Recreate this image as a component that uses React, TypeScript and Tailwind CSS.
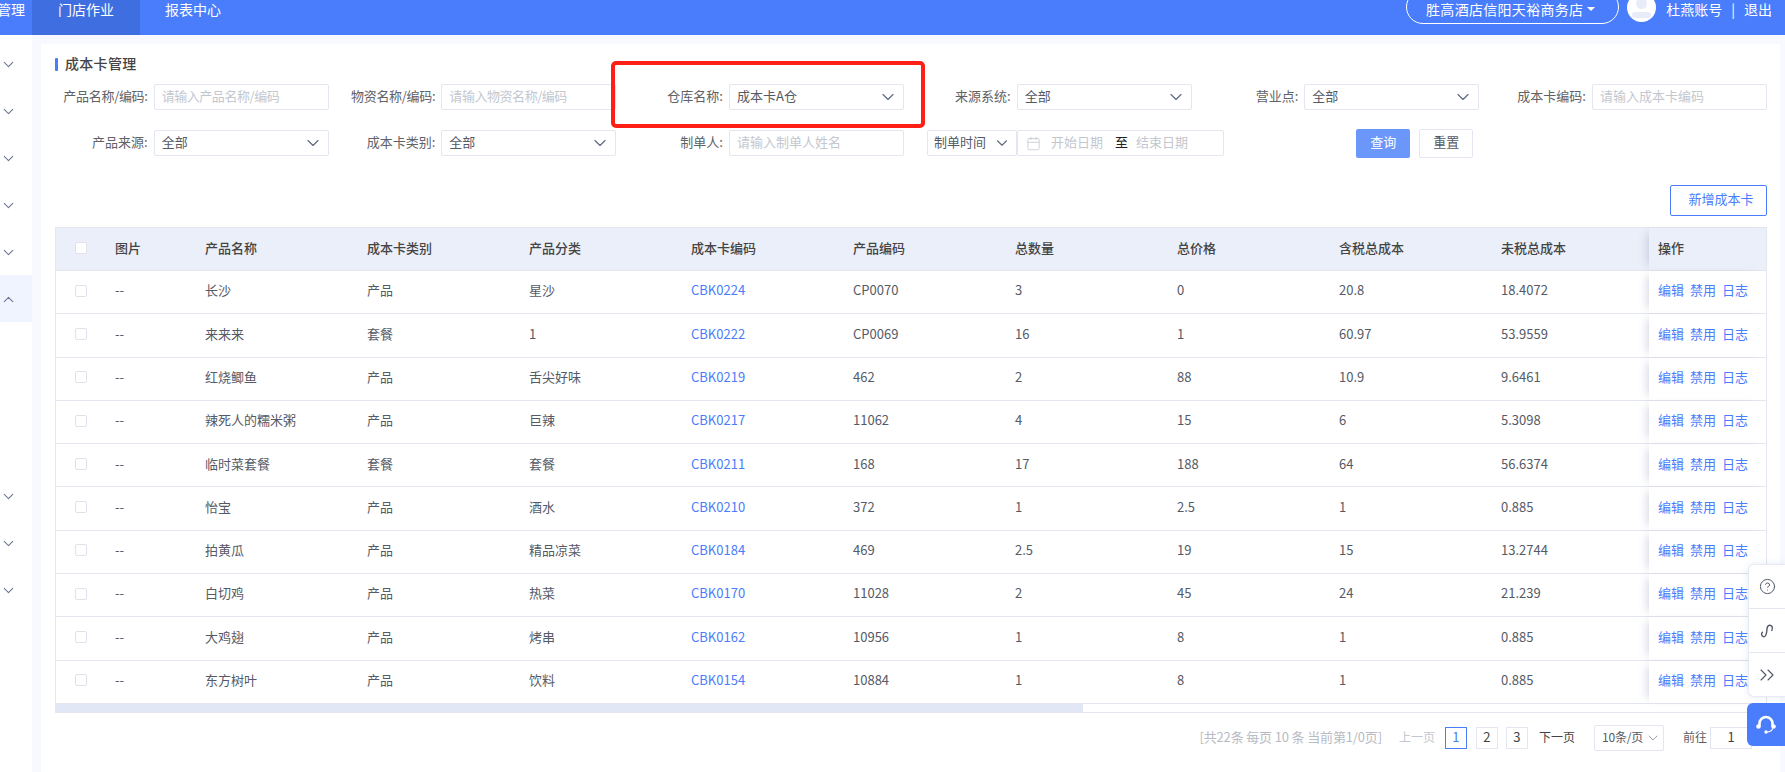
import React from 'react';
import { Calendar, ChevronDown, ChevronUp, ChevronsRight, CircleHelp } from 'lucide-react';

const rows = [
  ['长沙', '产品', '星沙', 'CBK0224', 'CP0070', '3', '0', '20.8', '18.4072'],
  ['来来来', '套餐', '1', 'CBK0222', 'CP0069', '16', '1', '60.97', '53.9559'],
  ['红烧鲫鱼', '产品', '舌尖好味', 'CBK0219', '462', '2', '88', '10.9', '9.6461'],
  ['辣死人的糯米粥', '产品', '巨辣', 'CBK0217', '11062', '4', '15', '6', '5.3098'],
  ['临时菜套餐', '套餐', '套餐', 'CBK0211', '168', '17', '188', '64', '56.6374'],
  ['怡宝', '产品', '酒水', 'CBK0210', '372', '1', '2.5', '1', '0.885'],
  ['拍黄瓜', '产品', '精品凉菜', 'CBK0184', '469', '2.5', '19', '15', '13.2744'],
  ['白切鸡', '产品', '热菜', 'CBK0170', '11028', '2', '45', '24', '21.239'],
  ['大鸡翅', '产品', '烤串', 'CBK0162', '10956', '1', '8', '1', '0.885'],
  ['东方树叶', '产品', '饮料', 'CBK0154', '10884', '1', '8', '1', '0.885'],
];

const headers = ['产品名称', '成本卡类别', '产品分类', '成本卡编码', '产品编码', '总数量', '总价格', '含税总成本', '未税总成本'];

const gridCols = 'grid grid-cols-[49px_90px_162px_162px_162px_162px_162px_162px_162px_162px_158px_1fr]';

const Field: React.FC<{ label: string; children: React.ReactNode }> = ({ label, children }) => (
  <div className="flex items-center justify-end">
    <span className={`mr-[6px] whitespace-nowrap pb-[2px] text-[13px] text-[#606266] ${label.includes('/') ? 'tracking-[-0.3px]' : ''}`}>{label}:</span>
    {children}
  </div>
);

const TextInput: React.FC<{ placeholder: string }> = ({ placeholder }) => (
  <div className="flex h-[26px] w-[175px] items-center rounded-[2px] border border-[#e3e6f0] pl-[7px] text-[13px] text-[#c4c7cf]">
    <span className={`pb-[2px] ${placeholder.includes('/') ? 'tracking-[-0.45px]' : ''}`}>{placeholder}</span>
  </div>
);

const Select: React.FC<{ value: string }> = ({ value }) => (
  <div className="flex h-[26px] w-[175px] items-center justify-between rounded-[2px] border border-[#e3e6f0] pl-[7px] pr-[5px] text-[13px] text-[#555a66]">
    <span className="pb-[2px]">{value}</span>
    <ChevronDown size={20} strokeWidth={1.4} className="text-[#606a80]" />
  </div>
);

const SideChevron: React.FC<{ up?: boolean }> = ({ up }) =>
  up ? (
    <ChevronUp size={17} strokeWidth={1.5} className="mt-[2px] text-[#6b7690]" />
  ) : (
    <ChevronDown size={17} strokeWidth={1.5} className="mt-[2px] text-[#6b7690]" />
  );

export default function App() {
  return (
    <div className="relative flex h-[772px] w-[1785px] flex-col overflow-hidden bg-white font-['Noto_Sans_CJK_SC','Liberation_Sans',sans-serif]">
      <header className="flex h-[35px] shrink-0 items-start overflow-hidden bg-[#4a7dfb] text-[14px] leading-[18px] text-white">
        <span className="-ml-[3px] w-[35px]">管理</span>
        <div className="flex h-full w-[108px] justify-center bg-[#3f6ee0]">门店作业</div>
        <span className="ml-[25px]">报表中心</span>
        <div className="ml-auto flex items-start pr-[13px]">
          <div className="-mt-[10px] flex h-[34px] w-[213px] items-center justify-center gap-[4px] rounded-full border border-white pr-[4px] pt-[3px] tracking-[0.3px]">
            胜高酒店信阳天裕商务店
            <span className="h-0 w-0 border-x-[4px] border-t-[4px] border-x-transparent border-t-white" />
          </div>
          <div className="relative -mt-[7px] ml-[8px] h-[29px] w-[29px] overflow-hidden rounded-full bg-white">
            <span className="absolute left-[9px] top-[5px] h-[11px] w-[11px] rounded-full bg-[#e8ebf8]" />
            <span className="absolute left-[5px] top-[19px] h-[6px] w-[19px] rounded-full bg-[#e8ebf8]" />
          </div>
          <span className="ml-[10px]">杜燕账号</span>
          <span className="ml-[9px]">|</span>
          <span className="ml-[9px]">退出</span>
        </div>
      </header>

      <div className="flex min-h-0 flex-1">
        <aside className="flex w-[32px] shrink-0 flex-col items-start bg-white pt-[5px]">
          <div className="flex h-[47px] w-full items-center"><SideChevron /></div>
          <div className="flex h-[47px] w-full items-center"><SideChevron /></div>
          <div className="flex h-[47px] w-full items-center"><SideChevron /></div>
          <div className="flex h-[47px] w-full items-center"><SideChevron /></div>
          <div className="flex h-[47px] w-full items-center"><SideChevron /></div>
          <div className="flex h-[47px] w-full items-center bg-[#f0f4ff]"><SideChevron up /></div>
          <div className="h-[150px]" />
          <div className="flex h-[47px] w-full items-center"><SideChevron /></div>
          <div className="flex h-[47px] w-full items-center"><SideChevron /></div>
          <div className="flex h-[47px] w-full items-center"><SideChevron /></div>
        </aside>

        <main className="min-w-0 flex-1 bg-[#f7f9ff] pl-[9px] pr-[5px] pt-[9px]">
          <div className="h-full bg-white pr-[13px] pt-[13px]">
            <div className="ml-[14px] flex h-[14px] items-center">
              <span className="h-[13px] w-[3px] rounded-[1px] bg-[#4a7dfb]" />
              <h2 className="ml-[7px] pb-[2px] text-[14px] font-medium tracking-[0.3px] text-[#444]">成本卡管理</h2>
            </div>

            <div className="mt-[13px] grid grid-cols-6 gap-y-[20px]">
              <Field label="产品名称/编码"><TextInput placeholder="请输入产品名称/编码" /></Field>
              <Field label="物资名称/编码"><TextInput placeholder="请输入物资名称/编码" /></Field>
              <Field label="仓库名称"><Select value="成本卡A仓" /></Field>
              <Field label="来源系统"><Select value="全部" /></Field>
              <Field label="营业点"><Select value="全部" /></Field>
              <Field label="成本卡编码"><TextInput placeholder="请输入成本卡编码" /></Field>
              <Field label="产品来源"><Select value="全部" /></Field>
              <Field label="成本卡类别"><Select value="全部" /></Field>
              <Field label="制单人"><TextInput placeholder="请输入制单人姓名" /></Field>
              <div className="col-span-2 flex h-[26px] items-start pl-[23px] pr-[6px] text-[13px]">
                <div className="flex h-[26px] w-[90px] items-center justify-between rounded-[2px] border border-[#e3e6f0] pl-[6px] pr-[5px] text-[#555a66]">
                  <span className="pb-[2px]">制单时间</span>
                  <ChevronDown size={18} strokeWidth={1.5} className="text-[#606a80]" />
                </div>
                <div className="flex h-[26px] w-[207px] items-center rounded-[2px] border border-[#e3e6f0] pl-[8px] text-[#c4c7cf]">
                  <Calendar size={15} strokeWidth={1.3} />
                  <span className="ml-[10px] pb-[2px]">开始日期</span>
                  <span className="ml-[12px] pb-[2px] text-[#222]">至</span>
                  <span className="ml-[8px] pb-[2px]">结束日期</span>
                </div>
                <div className="ml-auto -mt-px flex gap-[9px]">
                  <button className="h-[29px] w-[54px] rounded-[2px] bg-[#6b97fb] pb-[4px] text-white">查询</button>
                  <button className="h-[29px] w-[54px] rounded-[2px] border border-[#e3e6f0] pb-[4px] text-[#555a66]">重置</button>
                </div>
              </div>
            </div>

            <div className="mt-[29px] flex justify-end">
              <button className="h-[31px] w-[97px] rounded-[2px] border border-[#4a7dfb] pb-[4px] pl-[5px] text-[13px] text-[#4a7dfb]">新增成本卡</button>
            </div>

            <div className="ml-[14px] mt-[11px] border-x border-t border-[#e3e6f0]">
              <div className={`${gridCols} h-[43px] items-center border-b border-[#e3e6f0] bg-[#ebeff9] text-[13px] font-medium text-[#444]`}>
                <div className="pb-[2px] pl-[19px]"><span className="block h-[12px] w-[12px] rounded-[2px] border border-[#dfe2ec] bg-white" /></div>
                <div className="pb-[2px] pl-[10px]">图片</div>
                {headers.map((h) => (
                  <div key={h} className="pb-[2px] pl-[10px]">{h}</div>
                ))}
                <div className="relative flex h-full items-center pb-[2px] pl-[9px] shadow-[-7px_0_8px_-5px_rgba(90,110,160,0.25)]">操作</div>
              </div>
              {rows.map((row) => (
                <div key={row[3]} className={`${gridCols} h-[43.3px] items-center border-b border-[#e3e6f0] text-[13px] text-[#555a66]`}>
                  <div className="pb-[3px] pl-[19px]"><span className="block h-[12px] w-[12px] rounded-[2px] border border-[#dfe2ec]" /></div>
                  <div className="pb-[4px] pl-[10px]">--</div>
                  {row.map((cell, i) => (
                    <div key={i} className={i === 3 ? 'pb-[4px] pl-[10px] text-[#4a7dfb]' : 'pb-[4px] pl-[10px]'}>{cell}</div>
                  ))}
                  <div className="relative flex h-full items-center gap-[6px] bg-white pb-[4px] pl-[9px] text-[#4a7dfb] shadow-[-7px_0_8px_-5px_rgba(90,110,160,0.25)]">
                    <span>编辑</span>
                    <span>禁用</span>
                    <span>日志</span>
                  </div>
                </div>
              ))}
              <div className="h-[9px] border-b border-[#e3e6f0] bg-white">
                <div className="h-full w-[1027px] bg-[#e1e7f5]" />
              </div>
            </div>

            <div className="mr-[15px] mt-[12px] flex h-[26px] items-center justify-end text-[12px]">
              <span className="pb-[2px] text-[13px] tracking-[-0.15px] text-[#b8bbc4]">[共22条 每页 10 条 当前第1/0页]</span>
              <span className="ml-[17px] pb-[2px] text-[#c4c7cf]">上一页</span>
              <span className="ml-[10px] flex h-[22px] w-[22px] items-center justify-center border border-[#4a7dfb] pb-[2px] text-[13px] text-[#4a7dfb]">1</span>
              <span className="ml-[9px] flex h-[22px] w-[22px] items-center justify-center border border-[#e3e6f0] pb-[2px] text-[13px] text-[#444]">2</span>
              <span className="ml-[8px] flex h-[22px] w-[22px] items-center justify-center border border-[#e3e6f0] pb-[2px] text-[13px] text-[#444]">3</span>
              <span className="ml-[11px] pb-[2px] text-[#444]">下一页</span>
              <div className="ml-[19px] flex h-[26px] w-[70px] items-center justify-between whitespace-nowrap rounded-[2px] border border-[#e3e6f0] pl-[7px] pr-[2px] text-[#555a66]">
                <span className="pb-[2px] tracking-[-0.2px]">10条/页</span>
                <ChevronDown size={16} strokeWidth={1.3} className="text-[#8a90a0]" />
              </div>
              <span className="ml-[19px] pb-[2px] text-[#606266]">前往</span>
              <span className="ml-[3px] flex h-[22px] w-[42px] items-center justify-center border border-[#e3e6f0] pb-[2px] text-[13px] text-[#444]">1</span>
            </div>
          </div>
        </main>
      </div>

      {/* red annotation drawn over the warehouse field */}
      <div className="pointer-events-none absolute left-[611px] top-[61px] h-[67px] w-[314px] rounded-[5px] border-[4px] border-[#ff2015]" />

      {/* floating tool panel */}
      <div className="absolute right-0 top-[564px] flex w-[37px] flex-col rounded-l-[6px] border border-r-0 border-[#e8ebf5] bg-white text-[#4f5666] shadow-[0_0_6px_rgba(90,110,160,0.15)]">
        <div className="flex h-[44px] items-center justify-center border-b border-[#e3e6f0]">
          <CircleHelp size={17} strokeWidth={1.4} />
        </div>
        <div className="flex h-[44px] items-center justify-center border-b border-[#e3e6f0]">
          <svg width="14" height="14" viewBox="0 0 14 14" fill="none" stroke="currentColor" strokeWidth="1.4" strokeLinecap="round">
            <path d="M11.800 6.500C13.500 3.500 11.500 1 9.500 1.200C7.500 1.400 7.200 3 7 5C6.800 8 6.500 12.800 4 12.800C1.500 12.800 0.800 10 2.500 8.200" />
          </svg>
        </div>
        <div className="flex h-[43px] items-center justify-center">
          <ChevronsRight size={24} strokeWidth={1.1} />
        </div>
      </div>
      <div className="absolute right-0 top-[703px] flex h-[43px] w-[38px] items-center justify-center rounded-l-[6px] bg-[#4a7dfb]">
        <svg width="22" height="22" viewBox="0 0 22 22" fill="none" stroke="white" strokeWidth="2.6" strokeLinecap="round">
          <path d="M4.500 11V9.500a6.500 6.500 0 0 1 13 0V11" />
          <circle cx="3.500" cy="12.500" r="2.300" fill="white" stroke="none" />
          <circle cx="18.500" cy="12.500" r="2.300" fill="white" stroke="none" />
          <path d="M17.500 15C16.500 17 14.500 18 12 18" strokeWidth="1.2" />
          <circle cx="11" cy="18" r="1.700" fill="white" stroke="none" />
        </svg>
      </div>
    </div>
  );
}
